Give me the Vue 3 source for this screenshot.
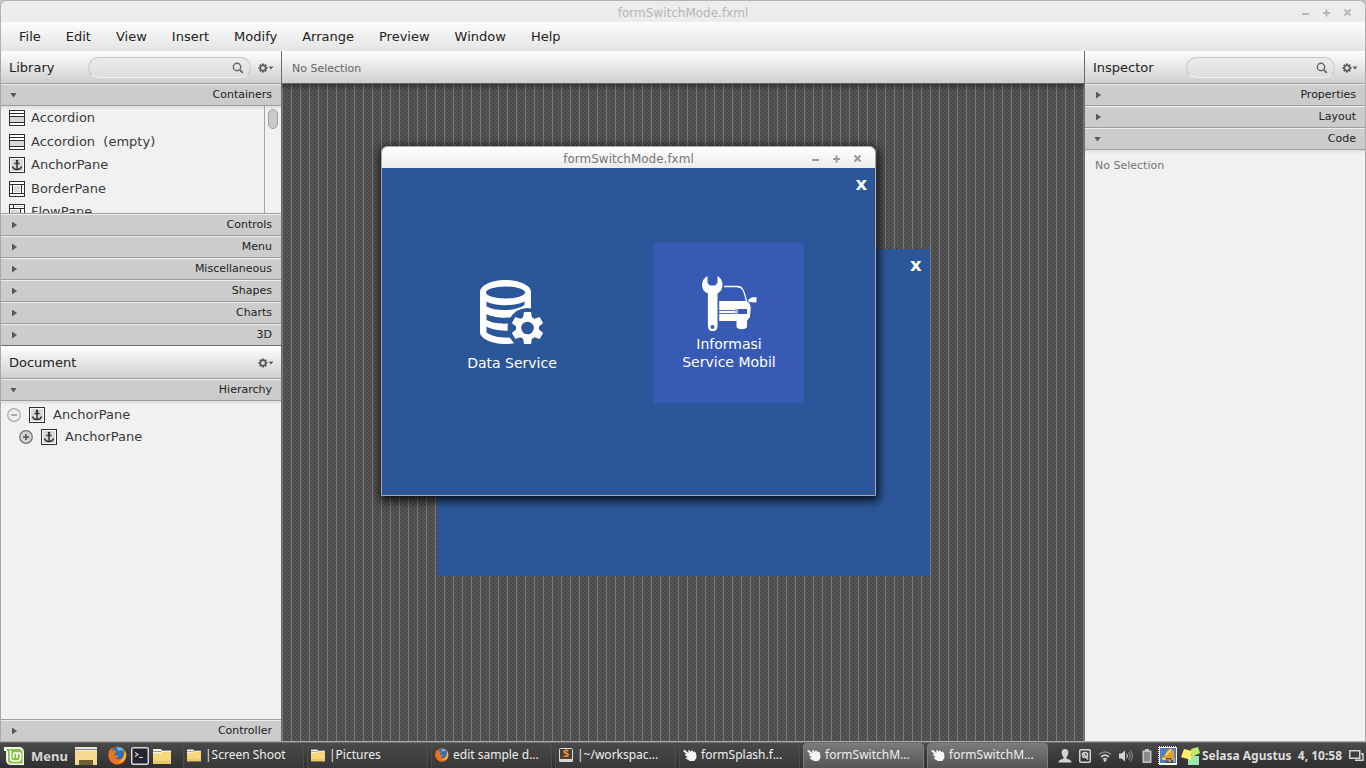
<script setup>
import { ref } from 'vue'

const menus = ['File', 'Edit', 'View', 'Insert', 'Modify', 'Arrange', 'Preview', 'Window', 'Help']
const containers = [
  { name: 'Accordion', icon: 'accordion' },
  { name: 'Accordion\u00a0 (empty)', icon: 'accordion' },
  { name: 'AnchorPane', icon: 'anchor' },
  { name: 'BorderPane', icon: 'border' },
  { name: 'FlowPane', icon: 'flow' },
]
const closedSections = ['Controls', 'Menu', 'Miscellaneous', 'Shapes', 'Charts', '3D']
const tree = [
  { name: 'AnchorPane', open: true },
  { name: 'AnchorPane', open: false },
]
const tasks = [
  { icon: 'folder', label: '|Screen Shoot' },
  { icon: 'folder', label: '|Pictures' },
  { icon: 'firefox', label: 'edit sample d...' },
  { icon: 'sublime', label: '|~/workspac...' },
  { icon: 'hand', label: 'formSplash.f...' },
  { icon: 'hand', label: 'formSwitchM...', active: true },
  { icon: 'hand', label: 'formSwitchM...', active: true },
]
const teeth = [0, 60, 120, 180, 240, 300]
const cogs = [0, 45, 90, 135, 180, 225, 270, 315]
const librarySearch = ref('')
const inspectorSearch = ref('')
</script>

<template>
  <div class="desktop">
    <svg class="defs" aria-hidden="true">
      <symbol id="gear" viewBox="0 0 16 10">
        <g fill="#5e5e5e">
          <rect v-for="a in cogs" :key="a" x="4" y="0.5" width="2" height="3" :transform="`rotate(${a} 5 5)`" />
        </g>
        <circle cx="5" cy="5" r="2.8" fill="none" stroke="#5e5e5e" stroke-width="1.4" />
        <circle cx="5" cy="5" r="1.800" fill="#e4e4e4" />
        <path d="M10.5 3.500h5L13 6.500z" fill="#5e5e5e" />
      </symbol>
      <symbol id="lens" viewBox="0 0 12 12">
        <circle cx="5" cy="5" r="3.7" fill="none" stroke="#666" stroke-width="1.4" />
        <path d="M7.8 7.8l3 3" stroke="#666" stroke-width="1.8" />
      </symbol>
      <symbol id="accordion" viewBox="0 0 16 16">
        <rect x="0.5" y="0.5" width="15" height="15" fill="#fff" stroke="#2e2e2e" />
        <rect x="1" y="7" width="14" height="5" fill="#d8d8d8" />
        <path d="M1 3.5h14M1 6.5h14M1 12.5h14" stroke="#2e2e2e" />
      </symbol>
      <symbol id="anchor" viewBox="0 0 16 16">
        <rect x="0.5" y="0.5" width="15" height="15" fill="#fff" stroke="#2e2e2e" />
        <rect x="2" y="2" width="12" height="12" fill="#d8d8d8" />
        <circle cx="8" cy="4" r="1.3" fill="#2e2e2e" />
        <path d="M8 4v8.5M5.5 6.5h5" stroke="#2e2e2e" stroke-width="1.4" />
        <path d="M3.5 9.5c.6 2 2 3 4.500 3s3.900-1 4.500-3" fill="none" stroke="#2e2e2e" stroke-width="1.4" />
      </symbol>
      <symbol id="border" viewBox="0 0 16 16">
        <rect x="0.5" y="0.5" width="15" height="15" fill="#fff" stroke="#2e2e2e" />
        <path d="M1 3.500h14M1 12.500h14M3.500 4v8M12.500 4v8" stroke="#2e2e2e" />
        <rect x="5" y="5" width="6" height="6" fill="#d8d8d8" />
      </symbol>
      <symbol id="flow" viewBox="0 0 16 16">
        <rect x="0.5" y="0.5" width="15" height="15" fill="#fff" stroke="#2e2e2e" />
        <path d="M1 4.500h14M4.500 1v3M11.500 5v10" stroke="#2e2e2e" />
        <rect x="2" y="6" width="8" height="8" fill="#d8d8d8" />
        <rect x="6" y="2" width="8" height="1" fill="#d8d8d8" />
      </symbol>
      <symbol id="plus" viewBox="0 0 14 14">
        <circle cx="7" cy="7" r="6.300" fill="#d4d4d4" stroke="#707070" stroke-width="1.200" />
        <path d="M4 7h6M7 4v6" stroke="#555" stroke-width="1.600" />
      </symbol>
      <symbol id="minus" viewBox="0 0 14 14">
        <circle cx="7" cy="7" r="6.300" fill="#efefef" stroke="#aaa" stroke-width="1.200" />
        <path d="M4 7h6" stroke="#999" stroke-width="1.600" />
      </symbol>
      <symbol id="folder" viewBox="0 0 18 16">
        <path d="M0 1h8l1 1.500h9V6H0z" fill="#f4f2ee" />
        <path d="M0 3.500h8l1-1h9" stroke="#8a857a" stroke-width="0.800" fill="none" />
        <path d="M0 5.500h7.500l1-1.500H18v12H0z" fill="#f6d77c" />
        <path d="M0 13h18v3H0z" fill="#eac766" />
      </symbol>
      <symbol id="firefox" viewBox="0 0 18 18">
        <circle cx="9" cy="9" r="8.600" fill="#e0601c" />
        <circle cx="9.500" cy="7.500" r="6.600" fill="#2a6fb8" />
        <path d="M8 1.500c3-.8 6 .8 7 3-2-1-3.500-.5-5 .5z" fill="#5cc0ea" />
        <path d="M.6 7C.8 4.500 2 3 3.200 2c0 1 .3 1.800 1 2.200 1.400-.4 3 .1 3.800.8-.3 1.300-1.600 1.500-2 2.500.2 1.500 1.500 1.800 3 1.400.8-.1 1.300.5 1 1.100-1 .8-2 1.500-3.500 1.200 2 2.200 6 1.800 8-1 .6-1.500.5-3 .2-4.500 2 2 2.600 5 1.300 7.600-2.200 3.700-6.800 5-10.700 3.200C1.500 14.500.1 11 .6 7z" fill="#ec7320" />
        <path d="M15.500 4c2 2.500 2 6 0 8.700-1.600 2-4 3-6.500 2.700 4.500-1 7-5 6.500-11.400z" fill="#fbc62c" />
      </symbol>
      <symbol id="sublime" viewBox="0 0 14 14">
        <rect x="0.500" y="0.500" width="13" height="13" rx="1" fill="#4a4038" stroke="#ddd" />
        <path d="M0 11h14v2.500H0z" fill="#d8d8d8" />
        <path d="M9.300 3C7.500 2 5 2.200 5 3.800c0 1.700 4.200.9 4.200 3 0 1.700-2.600 1.900-4.400.8" fill="none" stroke="#ef9a35" stroke-width="1.600" />
      </symbol>
      <symbol id="hand" viewBox="0 0 14 14">
        <path d="M0 3l1.500-1.200L5.500 5l-.3-2.500L6.500 2l1.300 2L8.500 2.500l1.300.3.700 1.500 1-.8 1.200 1 .8 3.500-.3 2.500-2 2.500H7L3.500 11l-1-1.500 2.300-.2L1.800 7l.7-1L4 6.500z" fill="#f4f4f4" />
      </symbol>
    </svg>

    <header class="titlebar">
      <h1>formSwitchMode.fxml</h1>
      <div class="controls">
        <button type="button" aria-label="Minimize"><svg viewBox="0 0 9 9"><path d="M1 6h7" /></svg></button>
        <button type="button" aria-label="Maximize"><svg viewBox="0 0 9 9"><path d="M1 5h7M4.500 1.500v7" /></svg></button>
        <button type="button" aria-label="Close"><svg viewBox="0 0 9 9"><path d="M1.500 1.500l6 6M7.500 1.500l-6 6" /></svg></button>
      </div>
    </header>

    <nav class="menubar">
      <button v-for="m in menus" :key="m" type="button">{{ m }}</button>
    </nav>

    <main class="main">
      <aside class="panel left">
        <div class="panel-head">
          <label for="lib-search">Library</label>
          <div class="search lib">
            <input id="lib-search" v-model="librarySearch" type="text" />
            <svg class="lens"><use href="#lens" /></svg>
          </div>
          <button type="button" class="gear" aria-label="Library options"><svg><use href="#gear" /></svg></button>
        </div>
        <button type="button" class="section open"><i></i>Containers</button>
        <div class="library">
          <ul>
            <li v-for="c in containers" :key="c.name">
              <svg class="item"><use :href="'#' + c.icon" /></svg>{{ c.name }}
            </li>
          </ul>
          <div class="scroll"><span></span></div>
        </div>
        <button v-for="s in closedSections" :key="s" type="button" class="section"><i></i>{{ s }}</button>
        <div class="panel-head doc">
          <h2>Document</h2>
          <button type="button" class="gear" aria-label="Document options"><svg><use href="#gear" /></svg></button>
        </div>
        <button type="button" class="section open"><i></i>Hierarchy</button>
        <ul class="tree">
          <li v-for="(n, i) in tree" :key="i" :class="{ child: i > 0 }">
            <button type="button" :aria-label="n.open ? 'Collapse' : 'Expand'">
              <svg><use :href="n.open ? '#minus' : '#plus'" /></svg>
            </button>
            <svg class="item"><use href="#anchor" /></svg>{{ n.name }}
          </li>
        </ul>
        <button type="button" class="section"><i></i>Controller</button>
      </aside>

      <section class="center">
        <div class="selection">No Selection</div>
        <div class="canvas">
          <div class="artboard"><button type="button" class="exit">x</button></div>
        </div>
        <div class="window">
          <div class="window-title">
            <h2>formSwitchMode.fxml</h2>
            <div class="controls">
              <button type="button" aria-label="Minimize preview"><svg viewBox="0 0 9 9"><path d="M1 6h7" /></svg></button>
              <button type="button" aria-label="Maximize preview"><svg viewBox="0 0 9 9"><path d="M1 5h7M4.500 1.500v7" /></svg></button>
              <button type="button" aria-label="Close preview"><svg viewBox="0 0 9 9"><path d="M1.500 1.500l6 6M7.500 1.500l-6 6" /></svg></button>
            </div>
          </div>
          <div class="window-body">
            <button type="button" class="exit">x</button>
            <div class="tiles">
              <button type="button" class="tile data">
                <svg width="64" height="64" viewBox="0 0 64 64">
                  <path d="M0 12C0 5.500 11.500 0 25.500 0S51 5.500 51 12v40c0 6.500-11.500 12-25.500 12S0 58.500 0 52z" fill="#fff" />
                  <g fill="#2b579a">
                    <ellipse cx="25.500" cy="12.500" rx="19.500" ry="6" />
                    <path d="M6.500 21.500c9 5 29 5 38 0V25c-9 6.500-29 6.500-38 1.500z" />
                    <path d="M6.500 34c9 5 29 5 38 0v5c-9 6-29 6-38 1z" />
                    <path d="M6.500 46.500c9 5.500 29 5.500 38 0v8c-9 4.500-29 4.500-38-2z" />
                    <circle cx="47.500" cy="48" r="20" />
                  </g>
                  <g fill="#fff">
                    <path v-for="a in teeth" :key="a" d="M43 38l1-6h7l1 6z" :transform="`rotate(${a} 47.500 48)`" />
                    <circle cx="47.500" cy="48" r="11.500" />
                  </g>
                  <circle cx="47.500" cy="48" r="6.300" fill="#2b579a" />
                </svg>
                <span>Data Service</span>
              </button>
              <button type="button" class="tile info">
                <svg width="55" height="55" viewBox="0 0 55 55">
                  <path d="M5.500 0v7L8 9.500h5L15.500 7V0c3.500 2 5 5 5 8.500 0 4.500-2 7.500-5 9v33a4.800 4.800 0 0 1-9.600 0v-33C2 16 0 13 0 8.500 0 5 2 2 5.500 0z" fill="#fff" />
                  <circle cx="10.500" cy="51" r="1.900" fill="#375ab4" />
                  <path d="M22 10.500h13c5 0 7 3 9.500 15" fill="none" stroke="#fff" stroke-width="1.300" />
                  <path d="M46 24l3.500-2.500L54.500 21v5.500L47 26z" fill="#fff" />
                  <path d="M17.200 25H45l3 3 .7 4-.7 9-3 3.500v6c0 3.500-10.500 3.500-10.500 0v-5.500H17.200z" fill="#fff" />
                  <path d="M35.500 33h9.500v5h-9.500z" fill="#375ab4" />
                  <path d="M17 34.500h16M17 37.500h16M34 32.500v6" stroke="#375ab4" stroke-width="0.900" />
                </svg>
                <span>Informasi<br />Service Mobil</span>
              </button>
            </div>
          </div>
        </div>
      </section>

      <aside class="panel right">
        <div class="panel-head">
          <label for="insp-search">Inspector</label>
          <div class="search insp">
            <input id="insp-search" v-model="inspectorSearch" type="text" />
            <svg class="lens"><use href="#lens" /></svg>
          </div>
          <button type="button" class="gear" aria-label="Inspector options"><svg><use href="#gear" /></svg></button>
        </div>
        <button type="button" class="section"><i></i>Properties</button>
        <button type="button" class="section"><i></i>Layout</button>
        <button type="button" class="section open"><i></i>Code</button>
        <div class="code">No Selection</div>
      </aside>
    </main>

    <footer class="taskbar">
      <button type="button" class="start">
        <svg width="21" height="20" viewBox="0 0 21 20">
          <path d="M0 1h15c3 0 5 2 5 5v13H7c-3 0-5-2-5-5V5H0z" fill="#f1f6ea" />
          <path d="M3 3h12c2 0 3.500 1.500 3.500 3.500V17.500H7.500C5 17.500 4 16 4 14V5H3z" fill="#86c540" />
          <path d="M6.500 4.500v7.500c0 2 1 3 3 3h4c2 0 3-1 3-3V9c0-3-3.500-3-3.500 0v3M13 9c0-3-3.500-3-3.500 0v3" fill="none" stroke="#fff" stroke-width="1.600" />
        </svg>
        Menu
      </button>
      <div class="launchers">
        <button type="button" aria-label="Show desktop">
          <svg width="22" height="18" viewBox="0 0 22 18">
            <rect width="22" height="18" fill="#f5da8d" />
            <rect width="22" height="4" fill="#e9e6df" />
            <path d="M0 2.500h22" stroke="#8d887c" />
            <rect x="4" y="13" width="14" height="5" fill="#6c6038" />
          </svg>
        </button>
        <button type="button" class="ff" aria-label="Firefox"><svg width="19" height="19"><use href="#firefox" /></svg></button>
        <button type="button" aria-label="Terminal">
          <svg width="18" height="18" viewBox="0 0 18 18">
            <rect x="0.750" y="0.750" width="16.500" height="16.500" rx="1.500" fill="#262430" stroke="#d6d6d6" stroke-width="1.500" />
            <path d="M4 5.500l3 2-3 2M8 10.500h4" fill="none" stroke="#d6d6d6" stroke-width="1.200" />
          </svg>
        </button>
        <button type="button" aria-label="Files"><svg width="18" height="16"><use href="#folder" /></svg></button>
      </div>
      <div class="tasks">
        <button v-for="(t, i) in tasks" :key="i" type="button" :class="{ active: t.active }">
          <svg><use :href="'#' + t.icon" /></svg><span>{{ t.label }}</span>
        </button>
      </div>
      <div class="tray">
        <svg width="14" height="14" viewBox="0 0 14 14"><path d="M7 0c2.500 0 3.500 1.700 3.300 4C10 6 9.300 7.300 8.500 8v1.500c2 1 5 1 5 4H.5c0-3 3-3 5-4V8C4.700 7.300 4 6 3.700 4 3.500 1.700 4.500 0 7 0z" fill="#d4d4d4" /></svg>
        <svg width="12" height="14" viewBox="0 0 12 14"><rect x="0.750" y="0.750" width="10.500" height="12.500" rx="1" fill="none" stroke="#d4d4d4" stroke-width="1.500" /><circle cx="6" cy="6" r="2.500" fill="none" stroke="#d4d4d4" stroke-width="1.500" /><path d="M4 4l5 6.500" stroke="#d4d4d4" stroke-width="1.500" /></svg>
        <svg width="14" height="12" viewBox="0 0 14 12"><path d="M1 4.500c3.500-3.300 8.500-3.300 12 0" fill="none" stroke="#8d8d8d" stroke-width="1.500" /><path d="M3 7c2.500-2.300 5.500-2.300 8 0M5 9.200c1.300-1 2.700-1 4 0" fill="none" stroke="#d4d4d4" stroke-width="1.500" /><circle cx="7" cy="10.500" r="1.300" fill="#d4d4d4" /></svg>
        <svg width="14" height="14" viewBox="0 0 14 14"><path d="M0 4.500h2.500L6 1.500v11L2.500 9.500H0z" fill="#d4d4d4" /><path d="M7.500 4.800c1.200 1.300 1.200 3.200 0 4.500" fill="none" stroke="#d4d4d4" /><path d="M9.500 3c2 2.400 2 5.700 0 8M11.500 1.500c2.500 3.300 2.500 7.700 0 11" fill="none" stroke="#999" /></svg>
        <svg class="battery" width="10" height="14" viewBox="0 0 10 14"><path d="M3 0h4v1.500h2.500V14H.5V1.500H3z" fill="#c4c4c4" /><path d="M2 3h6v9.500H2z" fill="#8c8c8c" /></svg>
        <svg class="bell" width="19" height="19" viewBox="0 0 19 19"><rect width="19" height="19" fill="#f3f3f3" /><rect x="2" y="2" width="16" height="15" fill="#4f7fbd" /><path d="M3 12c4 0 4-8 9-9 4-.5 5 4 4 8l1 2-4 2z" fill="#e3a02c" /><path d="M8 9c2-1 2-4 5-5" stroke="#ffe08a" fill="none" stroke-width="1.500" /><path d="M3 12h7v2H5z" fill="#f0d070" /><path d="M8 12h8v5H8z" fill="#5b5035" /><path d="M9 14h3v2M13 13h3v3" stroke="#ddd" fill="none" /><path d="M0 .5h19M.5 0v19" stroke="#111" stroke-dasharray="1 1" /></svg>
        <svg class="notes" width="19" height="20" viewBox="0 0 19 20"><path d="M10 3l7-2 2 6-8 4z" fill="#c0ec6c" /><path d="M7 10h11v9H7z" fill="#9be8b0" /><path d="M3 3l8 2-1 9-10-3z" fill="#fff066" /></svg>
        <time>Selasa Agustus&nbsp; 4, 10:58</time>
        <svg width="15" height="13" viewBox="0 0 15 13"><rect x="0.750" y="1.750" width="10" height="7.500" fill="none" stroke="#d4d4d4" stroke-width="1.500" /><path d="M12 4.750h2v6.500H6" fill="none" stroke="#d4d4d4" stroke-width="1.500" /></svg>
      </div>
    </footer>
  </div>
</template>

<style>
body {
  margin: 0;
  background: #c4c4c4;
  overflow: hidden;
}
</style>

<style scoped>
.desktop {
  display: grid;
  grid-template-rows: auto auto 1fr auto;
  height: 100vh;
  font: 13px/16px "DejaVu Sans", sans-serif;
  color: #3a3a3a;
}
.desktop *,
.desktop {
  box-sizing: border-box;
}
.defs {
  position: absolute;
  width: 0;
  height: 0;
}
button {
  margin: 0;
  padding: 0;
  border: 0;
  background: none;
  font: inherit;
  color: inherit;
}
h1,
h2 {
  margin: 0;
  font: inherit;
}
ul {
  margin: 0;
  padding: 0;
  list-style: none;
}
svg {
  display: block;
  flex: none;
}

.titlebar,
.window-title {
  display: grid;
  grid-template-columns: 1fr auto 1fr;
  align-items: center;
  font-size: 12px;
}
.titlebar {
  height: 22px;
  border: 1px solid #b2b2b2;
  border-bottom: 0;
  border-radius: 6px 6px 0 0;
  background: #ececec;
  color: #b6b6b6;
}
.titlebar h1,
.window-title h2 {
  grid-column: 2;
  padding-top: 2px;
}
.controls {
  display: flex;
  justify-content: flex-end;
  padding: 1px 7px 0 0;
}
.controls button {
  display: flex;
  justify-content: center;
  width: 21px;
}
.controls svg {
  width: 9px;
  height: 9px;
  fill: none;
  stroke: currentColor;
  stroke-width: 2px;
}

.menubar {
  display: flex;
  height: 29px;
  padding-left: 6px;
  border: solid #b2b2b2;
  border-width: 0 1px;
  background: linear-gradient(#fcfcfc, #e4e4e4);
  color: #222;
}
.menubar button {
  padding: 0 13px 0 12px;
}

.main {
  display: grid;
  grid-template-columns: 281px 1fr 281px;
  min-height: 0;
  border: solid #a8a8a8;
  border-width: 0 1px 1px;
  background: #f1f1f1;
}
.panel {
  display: flex;
  flex-direction: column;
  min-height: 0;
}
.left {
  border-right: 1px solid #6b6b6b;
}
.right {
  border-left: 1px solid #6b6b6b;
}
.panel-head {
  display: flex;
  align-items: center;
  flex: none;
  height: 32px;
  padding: 1px 7px 0 8px;
  background: linear-gradient(#fefefe, #cfcfcf);
  color: #222;
}
.panel-head.doc {
  height: 33px;
  border-top: 1px solid #6e6e6e;
}
.search {
  display: flex;
  align-items: center;
  height: 21px;
  margin-left: auto;
  padding-right: 6px;
  border: 1px solid #c6c6c6;
  border-bottom-color: #f2f2f2;
  border-radius: 11px;
  background: linear-gradient(#ececec, #dedede);
}
.lib {
  width: 163px;
}
.insp {
  width: 149px;
}
.search input {
  flex: 1;
  min-width: 0;
  height: 19px;
  padding: 0 8px;
  border: 0;
  outline: 0;
  background: none;
  font: inherit;
}
.lens {
  width: 12px;
  height: 12px;
}
.gear {
  margin-left: 7px;
}
.doc .gear {
  margin-left: auto;
}
.gear svg {
  width: 16px;
  height: 10px;
}

.section {
  display: flex;
  align-items: center;
  justify-content: space-between;
  flex: none;
  height: 22px;
  padding: 1px 9px 0 11px;
  border-top: 1px solid #9d9d9d;
  background: linear-gradient(#eee 1px, #cdcdcd 1px, #cbcbcb);
  color: #222;
  font-size: 11px;
}
.section i {
  width: 5px;
  height: 7px;
  background: #585858;
  clip-path: polygon(0 0, 100% 50%, 0 100%);
}
.section.open i {
  width: 7px;
  height: 5px;
  margin-left: -2px;
  clip-path: polygon(0 0, 100% 0, 50% 100%);
}
.library,
.tree,
.code {
  border-top: 1px solid #9d9d9d;
  background: linear-gradient(#ddd, #f1f1f1 4px);
}
.library {
  display: flex;
  flex: none;
  height: 108px;
  overflow: hidden;
}
.library ul {
  flex: 1;
  padding: 0 0 0 8px;
}
.library li {
  display: flex;
  align-items: center;
  height: 23px;
}
.library li:nth-child(odd) {
  height: 24px;
}
.item {
  width: 16px;
  height: 16px;
}
.library .item {
  margin-right: 6px;
}
.scroll {
  width: 17px;
  padding: 3px;
  border-left: 1px solid #a6a6a6;
}
.scroll span {
  display: block;
  width: 10px;
  height: 20px;
  border: 1px solid #a2a2a2;
  border-radius: 5px;
  background: #cacaca;
}
.tree {
  flex: 1;
  padding: 3px 0 0 6px;
}
.tree li {
  display: flex;
  align-items: center;
  gap: 8px;
  height: 22px;
}
.tree .child {
  padding-left: 12px;
}
.tree button svg {
  width: 14px;
  height: 14px;
}
.code {
  flex: 1;
  padding: 8px 10px;
  font-size: 11px;
  color: #757575;
}

.center {
  position: relative;
  display: flex;
  flex-direction: column;
  min-width: 0;
}
.selection {
  display: flex;
  align-items: center;
  height: 33px;
  padding: 3px 10px 0;
  border-bottom: 1px solid #666;
  background: linear-gradient(#fefefe, #cfcfcf);
  font-size: 11px;
  color: #666;
}
.canvas {
  display: flex;
  flex: 1;
  align-items: center;
  justify-content: center;
  background:
    linear-gradient(rgba(0, 0, 0, 0.35), transparent 6px),
    repeating-linear-gradient(90deg, #7a7a7a 0 1px, transparent 1px 9px),
    repeating-conic-gradient(#4a4a4a 0 25%, #565656 0 50%) 0 0 / 4px 4px;
}
.artboard {
  display: flex;
  justify-content: flex-end;
  align-items: flex-start;
  width: 493px;
  height: 327px;
  padding: 7px 8px;
  background: #2b579a;
}
.exit {
  font-size: 18px;
  line-height: 18px;
  font-weight: bold;
  color: #fff;
}
.window {
  position: absolute;
  top: 95px;
  left: 99px;
  border: 1px solid #a9a9a9;
  border-radius: 6px 6px 0 0;
  background: #2b579a;
  box-shadow: 1px 3px 10px 2px rgba(0, 0, 0, 0.8);
}
.window-title {
  height: 21px;
  border-radius: 5px 5px 0 0;
  background: linear-gradient(#fff, #ececec);
  color: #787878;
}
.window-title .controls {
  color: #999;
}
.window-body {
  display: flex;
  flex-direction: column;
  align-items: flex-end;
  height: 327px;
  padding: 7px 8px;
}
.tiles {
  display: flex;
  gap: 67px;
  padding: 50px 63px 0 47px;
}
.tile {
  display: flex;
  flex-direction: column;
  align-items: center;
  width: 150px;
  height: 160px;
  color: #fff;
  font-size: 14px;
  line-height: 18px;
}
.data {
  gap: 10px;
  padding-top: 37px;
}
.info {
  gap: 4px;
  padding-top: 33px;
  background: #375ab4;
}

.taskbar {
  display: flex;
  align-items: center;
  height: 26px;
  border-top: 1px solid #6c6c6c;
  background: linear-gradient(#494949, #303030);
  font-family: "Noto Sans", sans-serif;
  font-size: 12px;
  color: #f0f0f0;
}
.start {
  display: flex;
  align-items: center;
  gap: 6px;
  width: 75px;
  padding-left: 4px;
  font-size: 13px;
  font-weight: bold;
  color: #d8d8d8;
}
.launchers {
  display: flex;
  align-items: center;
  gap: 4px;
  width: 108px;
}
.ff {
  margin-left: 7px;
}
.tasks {
  display: flex;
  flex: 1;
  gap: 3px;
  align-self: stretch;
  min-width: 0;
}
.tasks button {
  display: flex;
  align-items: center;
  gap: 4px;
  width: 121px;
  padding: 0 3px 2px;
  border: 1px solid #4c4c4c;
  border-bottom: 0;
  border-radius: 4px 4px 0 0;
  background: linear-gradient(#484848, #383838);
  white-space: nowrap;
}
.tasks .active {
  border-color: #7c7c7c;
  background: linear-gradient(#7a7a7a, #555);
}
.tasks svg {
  width: 14px;
  height: 14px;
}
.tray {
  display: flex;
  align-items: center;
  gap: 7px;
  padding-right: 2px;
}
.tray time {
  font-weight: bold;
  color: #dedede;
}
.battery {
  margin-left: 2px;
}
.bell {
  margin-left: -1px;
}
.notes {
  margin: 0 -5px 0 -3px;
}
</style>
